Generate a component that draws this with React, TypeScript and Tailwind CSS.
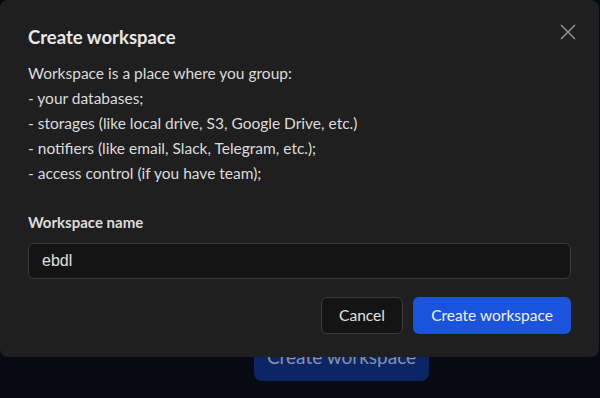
import React from "react";

export default function App() {
  const font = { fontFamily: "Lato, 'Noto Sans', sans-serif" };
  return (
    <div className="relative w-[600px] h-[398px] overflow-hidden bg-[#070a12]" style={font}>
      {/* background page */}
      <div className="flex pt-[334px] pl-[254px]">
        <div className="w-[175px] h-[47px] rounded-lg bg-[#0b2566] flex items-center justify-center text-[19px] text-[#8a92a3]">
          Create workspace
        </div>
      </div>

      {/* modal */}
      <div className="absolute left-0 top-0 w-[599px] h-[357px] rounded-lg bg-[#1f1f1f] px-7 pt-[25px]">
        <button className="absolute right-[23px] top-[24px] text-[#9a9a9a]">
          <svg width="16" height="16" viewBox="0 0 16 16" fill="none" stroke="currentColor" strokeWidth="1.4">
            <path d="M1 1L15 15M15 1L1 15" />
          </svg>
        </button>
        <div className="text-[18.5px] leading-6 font-bold text-[#e8e8e8]">Create workspace</div>
        <div className="mt-[12px] text-[15.5px] leading-[25px] text-[#dcdcdc]">
          <div>Workspace is a place where you group:</div>
          <div>- your databases;</div>
          <div>- storages (like local drive, S3, Google Drive, etc.)</div>
          <div>- notifiers (like email, Slack, Telegram, etc.);</div>
          <div>- access control (if you have team);</div>
        </div>
        <div className="mt-[26px] text-[15px] leading-5 font-bold text-[#dcdcdc]">Workspace name</div>
        <div
          className="mt-[11px] h-[36px] w-full rounded-md border border-[#3a3a3a] bg-[#141414] flex items-center pl-[13px] text-[16px] text-[#e0e0e0]"
          style={{ fontFamily: "'Liberation Sans', Arial, sans-serif" }}
        >
          ebdl
        </div>
        <div className="mt-[18px] flex justify-end gap-[10px]">
          <button className="h-[37px] w-[82px] rounded-md border border-[#3a3a3a] bg-[#141414] text-[15.5px] text-[#e0e0e0]">
            Cancel
          </button>
          <button className="h-[37px] w-[158px] rounded-md bg-[#1a54dc] text-[15.5px] text-[#eef2ff]">
            Create workspace
          </button>
        </div>
      </div>
    </div>
  );
}
